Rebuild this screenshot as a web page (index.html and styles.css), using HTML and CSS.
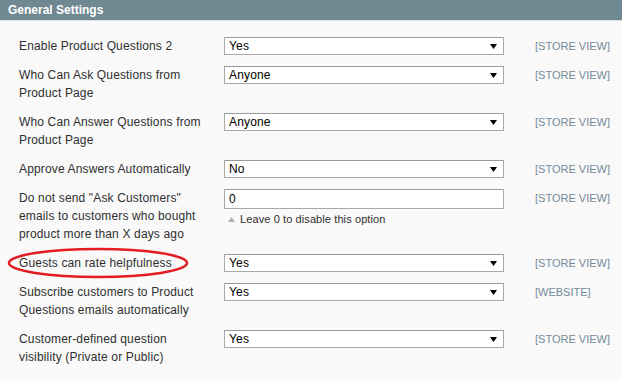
FILE: index.html
```html
<!DOCTYPE html>
<html>
<head>
<meta charset="utf-8">
<link rel="stylesheet" href="styles.css">
</head>
<body>
<div class="section">
  <div class="section-head">General Settings</div>
  <div class="form">
    <div class="row">
      <div class="label">Enable Product Questions 2</div>
      <div class="value"><div class="select"><span>Yes</span><svg class="arrow" width="7" height="5" viewBox="0 0 7 5"><path d="M0 0H7L3.5 5Z"/></svg></div></div>
      <div class="scope">[STORE VIEW]</div>
    </div>
    <div class="row">
      <div class="label">Who Can Ask Questions from Product Page</div>
      <div class="value"><div class="select"><span>Anyone</span><svg class="arrow" width="7" height="5" viewBox="0 0 7 5"><path d="M0 0H7L3.5 5Z"/></svg></div></div>
      <div class="scope">[STORE VIEW]</div>
    </div>
    <div class="row">
      <div class="label">Who Can Answer Questions from Product Page</div>
      <div class="value"><div class="select"><span>Anyone</span><svg class="arrow" width="7" height="5" viewBox="0 0 7 5"><path d="M0 0H7L3.5 5Z"/></svg></div></div>
      <div class="scope">[STORE VIEW]</div>
    </div>
    <div class="row">
      <div class="label">Approve Answers Automatically</div>
      <div class="value"><div class="select"><span>No</span><svg class="arrow" width="7" height="5" viewBox="0 0 7 5"><path d="M0 0H7L3.5 5Z"/></svg></div></div>
      <div class="scope">[STORE VIEW]</div>
    </div>
    <div class="row">
      <div class="label">Do not send "Ask Customers" emails to customers who bought product more than X days ago</div>
      <div class="value">
        <div class="input">0</div>
        <div class="hint"><svg class="hint-arrow" width="7" height="5" viewBox="0 0 7 5"><path d="M0 5H7L3.5 0Z"/></svg>Leave 0 to disable this option</div>
      </div>
      <div class="scope">[STORE VIEW]</div>
    </div>
    <div class="row">
      <div class="label marked">Guests can rate helpfulness<svg class="ring" width="182" height="32" viewBox="0 0 182 32"><ellipse cx="91" cy="16" rx="89" ry="14" fill="none" stroke="#e31b23" stroke-width="2.5"/></svg></div>
      <div class="value"><div class="select"><span>Yes</span><svg class="arrow" width="7" height="5" viewBox="0 0 7 5"><path d="M0 0H7L3.5 5Z"/></svg></div></div>
      <div class="scope">[STORE VIEW]</div>
    </div>
    <div class="row">
      <div class="label">Subscribe customers to Product Questions emails automatically</div>
      <div class="value"><div class="select"><span>Yes</span><svg class="arrow" width="7" height="5" viewBox="0 0 7 5"><path d="M0 0H7L3.5 5Z"/></svg></div></div>
      <div class="scope">[WEBSITE]</div>
    </div>
    <div class="row">
      <div class="label">Customer-defined question visibility (Private or Public)</div>
      <div class="value"><div class="select"><span>Yes</span><svg class="arrow" width="7" height="5" viewBox="0 0 7 5"><path d="M0 0H7L3.5 5Z"/></svg></div></div>
      <div class="scope">[STORE VIEW]</div>
    </div>
  </div>
</div>
</body>
</html>
```

FILE: styles.css
```css
html, body {
  margin: 0;
  padding: 0;
  background: #f9f9f9;
  font-family: "Liberation Sans", Arial, sans-serif;
  font-size: 12px;
  color: #2f2f2f;
  width: 622px;
  height: 380px;
  overflow: hidden;
}

.section-head {
  height: 20px;
  line-height: 20px;
  background: #6f8891;
  color: #ffffff;
  font-weight: bold;
  font-size: 12px;
  padding-left: 8px;
  border-bottom: 1px solid #d9e0e3;
}

.form {
  display: flex;
  flex-direction: column;
  gap: 11px;
  padding: 16px 0 0 19px;
}

.row {
  display: flex;
  align-items: flex-start;
}

.label {
  width: 187px;
  margin-right: 18px;
  line-height: 18px;
  letter-spacing: 0.15px;
}

.marked {
  position: relative;
}

.ring {
  position: absolute;
  left: -12px;
  top: -7px;
}

.value {
  width: 280px;
  display: flex;
  flex-direction: column;
}

.select, .input {
  box-sizing: border-box;
  height: 18px;
  background: #ffffff;
  border: 1px solid #a9a9a9;
  border-top-color: #9b9b9b;
  color: #000000;
  padding-left: 4px;
  line-height: 16px;
  font-size: 12px;
  letter-spacing: 0.15px;
}

.select {
  display: flex;
  align-items: center;
  justify-content: space-between;
  padding-right: 6px;
}

.input {
  height: 20px;
  line-height: 18px;
}

.arrow {
  display: block;
  fill: #000000;
}

.hint {
  margin-top: 3px;
  font-size: 11px;
  line-height: 14px;
  color: #2f2f2f;
  display: flex;
  align-items: center;
  padding-left: 4px;
  letter-spacing: 0.1px;
}

.hint-arrow {
  fill: #a7b1b6;
  margin-right: 5px;
}

.scope {
  margin-left: 31px;
  font-size: 11px;
  line-height: 18px;
  color: #74899a;
}
```
